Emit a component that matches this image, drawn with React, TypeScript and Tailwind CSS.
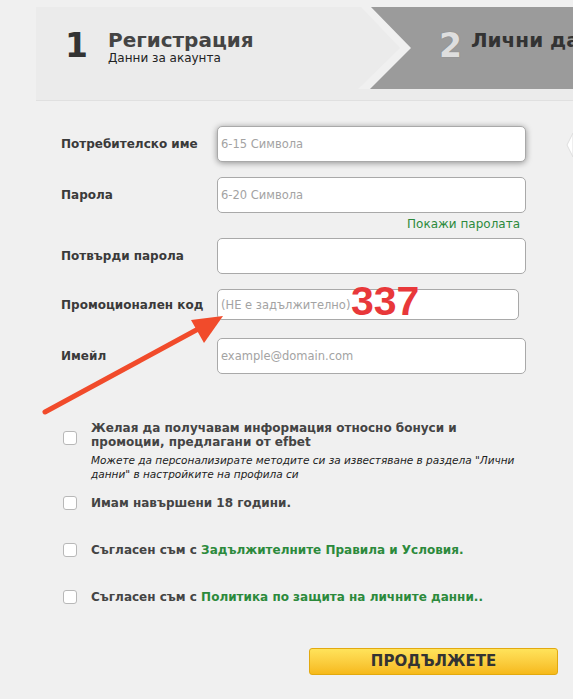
const fieldClass =
  'h-full rounded-[5px] border border-[#a9a9a9] bg-white px-[3px] text-[11.5px] text-[#333] outline-none placeholder:text-[#a3a3a3]';

function Field({ label, placeholder, h = 'h-[36px]', w = 'w-[309px]', focus = false }: { label: string; placeholder?: string; h?: string; w?: string; focus?: boolean }) {
  return (
    <div className={`flex items-center ${h}`}>
      <span className="w-[156px] text-[12px] font-bold text-[#3a3a3a]">{label}</span>
      <input
        readOnly
        placeholder={placeholder}
        className={`${fieldClass} ${w} ${focus ? 'shadow-[0_1px_6px_rgba(0,0,0,0.4)]' : ''}`}
      />
    </div>
  );
}

function Box() {
  return <span className="block w-[14px] h-[14px] shrink-0 rounded-[3px] border border-[#b8b8b8] bg-white" />;
}

export default function App() {
  return (
    <div className="relative w-[573px] h-[699px] overflow-hidden bg-[#f0f0f0] font-['DejaVu_Sans',sans-serif]">
      <div className="ml-[36px] pt-[7px]">
        {/* steps header */}
        <div className="relative h-[94px] overflow-hidden bg-[#ebebeb] border-b border-[#e0e0e0]">
          <svg className="absolute inset-0" width="537" height="93" viewBox="0 0 537 93">
            <polygon points="325,0 335,0 376,41 334,82 322,82 364,41" fill="#f0f0f0" />
            <polygon points="335,0 537,0 537,82 334,82 375,41" fill="#9b9b9b" />
          </svg>
          <div className="relative flex items-start pt-[22px]">
            <div className="flex w-[403px] shrink-0 items-start">
              <span className="ml-[29px] text-[33px] leading-none font-bold text-[#333]">1</span>
              <div className="ml-[20px] mt-[1px]">
                <div className="text-[20px] leading-none font-bold text-[#444]">Регистрация</div>
                <div className="mt-[1px] text-[12px] leading-[14px] text-[#222]">Данни за акаунта</div>
              </div>
            </div>
            <span className="shrink-0 text-[33px] leading-none font-bold text-[#dedede] [text-shadow:0_0_1px_#777]">2</span>
            <span className="ml-[9px] mt-[1px] shrink-0 whitespace-nowrap text-[20px] leading-none font-bold text-[#333]">Лични данни</span>
          </div>
        </div>

        {/* form */}
        <div className="pl-[25px] pt-[25px]">
          <Field label="Потребителско име" placeholder="6-15 Символа" focus />
          <div className="mt-[15px]">
            <Field label="Парола" placeholder="6-20 Символа" />
          </div>
          <div className="h-[25px] w-[465px] pr-[6px] pt-[4px] text-right text-[12px] leading-[14px] text-[#2c8a3c]">Покажи паролата</div>
          <Field label="Потвърди парола" />
          <div className="mt-[15px]">
            <Field label="Промоционален код" placeholder="(НЕ е задължително)" h="h-[31px]" w="w-[302px]" />
          </div>
          <div className="mt-[18px]">
            <Field label="Имейл" placeholder="example@domain.com" />
          </div>

          {/* agreements */}
          <div className="mt-[47px] flex items-start">
            <div className="ml-[2px] mt-[10px]"><Box /></div>
            <div className="ml-[14px]">
              <div className="text-[12px] leading-[14px] font-bold text-[#444]">
                Желая да получавам информация относно бонуси и<br />промоции, предлагани от efbet
              </div>
              <div className="mt-[4px] text-[10.5px] leading-[14px] italic text-[#222]">
                Можете да персонализирате методите си за известяване в раздела "Лични<br />данни" в настройките на профила си
              </div>
            </div>
          </div>
          <div className="mt-[14px] flex h-[16px] items-center">
            <div className="ml-[2px]"><Box /></div>
            <span className="ml-[14px] text-[12px] font-bold text-[#444]">Имам навършени 18 години.</span>
          </div>
          <div className="mt-[31px] flex h-[16px] items-center">
            <div className="ml-[2px]"><Box /></div>
            <span className="ml-[14px] text-[12px] font-bold text-[#444]">
              Съгласен съм с <span className="text-[#2c8a3c]">Задължителните Правила и Условия.</span>
            </span>
          </div>
          <div className="mt-[31px] flex h-[16px] items-center">
            <div className="ml-[2px]"><Box /></div>
            <span className="ml-[14px] text-[12px] font-bold text-[#444]">
              Съгласен съм с <span className="text-[#2c8a3c]">Политика по защита на личните данни..</span>
            </span>
          </div>

          <button className="mt-[43px] ml-[248px] flex h-[27px] w-[249px] items-center justify-center rounded-[3px] border border-[#e2a90f] bg-gradient-to-b from-[#ffe35a] to-[#f6b918] text-[15px] font-bold text-[#333]">
            ПРОДЪЛЖЕТЕ
          </button>
        </div>
      </div>

      {/* tooltip tip on the right */}
      <svg className="absolute left-[565px] top-[133px]" width="8" height="24" viewBox="0 0 8 24">
        <polygon points="8,0 2,12 8,24" fill="#ffffff" stroke="#dedede" strokeWidth="1" />
      </svg>

      {/* annotation */}
      <span className="absolute left-[351px] top-[281px] text-[41px] leading-none font-bold text-[#e8383a] font-['Liberation_Sans',sans-serif]">337</span>
      <svg className="absolute left-0 top-0" width="573" height="699" viewBox="0 0 573 699">
        <line x1="45" y1="412" x2="200" y2="328" stroke="#f14b2b" strokeWidth="5" strokeLinecap="round" />
        <polygon points="223,316 191,320 204,343" fill="#f14b2b" />
      </svg>
    </div>
  );
}
